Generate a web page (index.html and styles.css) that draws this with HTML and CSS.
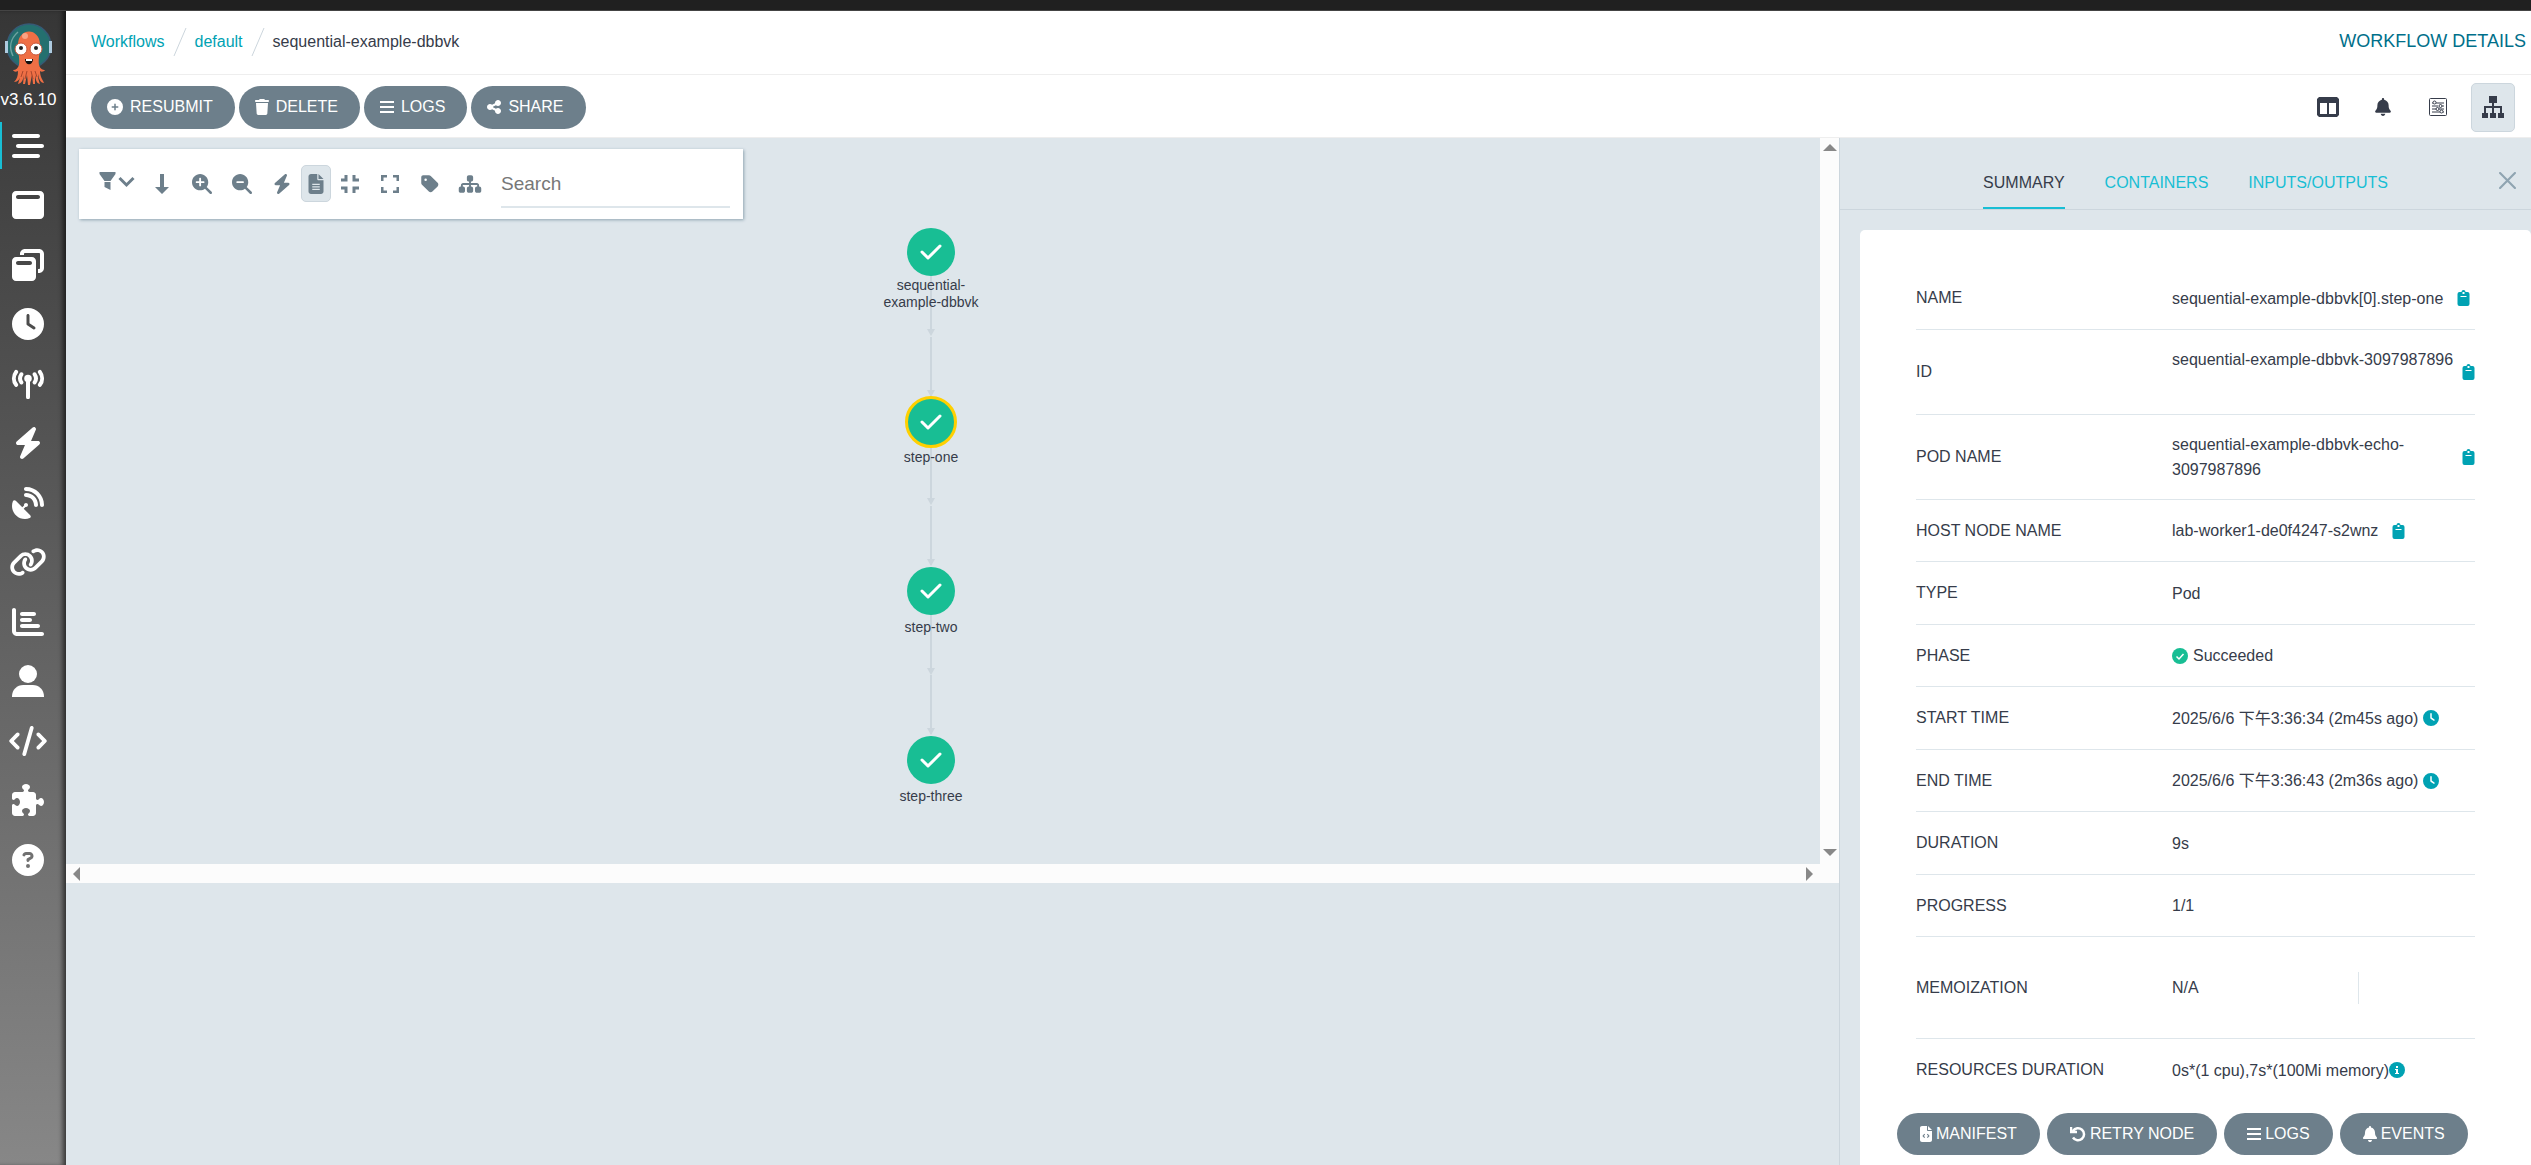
FILE: index.html
```html
<!DOCTYPE html>
<html lang="en">
<head>
  <meta charset="UTF-8">
  <meta name="viewport" content="width=device-width, initial-scale=1.0">
  <title>Workflow Details</title>
  <link rel="stylesheet" href="styles.css">
</head>
<body>
<!-- Icon sprite -->
<svg class="sprite" aria-hidden="true">
  <symbol id="logo" viewBox="0 0 48 62">
    <circle cx="24" cy="23" r="22" fill="#24706f" stroke="#365a76" stroke-width="1.5"/>
    <path d="M0 18h3v12H0zM44 18h3v12h-3z" fill="#aecbe0"/>
    <path d="M13 9C5 16 4 25 8 33" fill="none" stroke="#6ea3a0" stroke-width="1.5"/>
    <path d="M13 22c0-18 22-18 22 0 0 8-2 14-1 20 1 4 4 5 6 5-1 2-4 2-5 1 0 6 3 9 4 12-3 0-5-3-6-9 0 5 1 7 2 10-4-1-4-4-5-9v9h-2l-1-9-2 10h-2l-1-10-2 9h-2l1-9c-1 5-2 8-6 9l3-10c-1 5-3 8-7 8 3-3 4-6 4-11-2 1-4 1-5-1 3 0 5-2 6-5 1-6-1-12-1-20z" fill="#ef6f45"/>
    <path d="M22 48l-2 8M26 48l2 8M18 48l-2 6M30 48l2 6" stroke="#a8452c" stroke-width="1"/>
    <circle cx="20" cy="13" r="3" fill="#f9a484"/>
    <circle cx="16" cy="26" r="6" fill="#fff" stroke="#c9573a"/>
    <circle cx="31" cy="26" r="6" fill="#fff" stroke="#c9573a"/>
    <circle cx="16" cy="25" r="2" fill="#222"/>
    <circle cx="31" cy="25" r="2" fill="#222"/>
    <path d="M20 36h8c0 7-8 7-8 0z" fill="#111"/>
    <path d="M21 36h6v2h-6z" fill="#fff"/>
  </symbol>
  <symbol id="menu" viewBox="0 0 512 512"><path d="M0 96C0 78.3 14.3 64 32 64H416c17.7 0 32 14.3 32 32s-14.3 32-32 32H32C14.3 128 0 113.7 0 96zM64 256c0-17.7 14.3-32 32-32H480c17.7 0 32 14.3 32 32s-14.3 32-32 32H96c-17.7 0-32-14.3-32-32zM448 416c0 17.7-14.3 32-32 32H32c-17.7 0-32-14.3-32-32s14.3-32 32-32H416c17.7 0 32 14.3 32 32z"/></symbol>
  <symbol id="window" viewBox="0 0 512 512"><path fill-rule="evenodd" d="M64 32C28.7 32 0 60.7 0 96V416c0 35.3 28.7 64 64 64H448c35.3 0 64-28.7 64-64V96c0-35.3-28.7-64-64-64H64zM96 96H416c17.7 0 32 14.3 32 32s-14.3 32-32 32H96c-17.7 0-32-14.3-32-32s14.3-32 32-32z"/></symbol>
  <symbol id="windows" viewBox="0 0 512 512"><path fill-rule="evenodd" d="M432 64H208c-8.8 0-16 7.2-16 16V96H128V80c0-44.2 35.8-80 80-80H432c44.2 0 80 35.8 80 80V304c0 44.2-35.8 80-80 80H416V320h16c8.8 0 16-7.2 16-16V80c0-8.8-7.2-16-16-16zM0 192c0-35.3 28.7-64 64-64H320c35.3 0 64 28.7 64 64V448c0 35.3-28.7 64-64 64H64c-35.3 0-64-28.7-64-64V192zm64 32c0 17.7 14.3 32 32 32H288c17.7 0 32-14.3 32-32s-14.3-32-32-32H96c-17.7 0-32 14.3-32 32z"/></symbol>
  <symbol id="clock" viewBox="0 0 512 512"><path fill-rule="evenodd" d="M256 0a256 256 0 1 1 0 512A256 256 0 1 1 256 0zM232 120V256c0 8 4 15.5 10.7 20l96 64c11 7.4 25.9 4.4 33.3-6.7s4.4-25.9-6.7-33.3L280 243.2V120c0-13.3-10.7-24-24-24s-24 10.7-24 24z"/></symbol>
  <symbol id="tower" viewBox="0 0 576 512">
    <circle cx="288" cy="160" r="64"/>
    <path d="M288 170V480M175 90c-28 42-28 98 0 140M401 90c28 42 28 98 0 140M85 50c-50 66-50 154 0 220M491 50c50 66 50 154 0 220" fill="none" stroke="currentColor" stroke-width="68" stroke-linecap="round"/>
  </symbol>
  <symbol id="bolt" viewBox="0 0 448 512"><path d="M349.4 44.6c5.9-13.7 1.5-29.7-10.6-38.5s-28.6-8-39.9 1.8l-256 224c-10 8.8-13.6 22.9-8.9 35.3S50.7 288 64 288H175.5L98.6 467.4c-5.9 13.7-1.5 29.7 10.6 38.5s28.6 8 39.9-1.8l256-224c10-8.8 13.6-22.9 8.9-35.3s-16.6-20.7-30-20.7H272.5L349.4 44.6z"/></symbol>
  <symbol id="dish" viewBox="0 0 512 512"><path d="M192 32c0-17.7 14.3-32 32-32C383.1 0 512 128.9 512 288c0 17.7-14.3 32-32 32s-32-14.3-32-32C448 164.3 347.7 64 224 64c-17.7 0-32-14.3-32-32zM60.6 220.6L164.7 324.7l28.4-28.4c-.7-2.6-1.1-5.4-1.1-8.3c0-17.7 14.3-32 32-32s32 14.3 32 32s-14.3 32-32 32c-2.9 0-5.6-.4-8.3-1.1l-28.4 28.4L291.4 451.4c14.5 14.5 11.8 38.8-7.3 46.3C260.5 506.9 234.9 512 208 512C93.1 512 0 418.9 0 304c0-26.9 5.1-52.5 14.4-76.1c7.5-19 31.8-21.8 46.3-7.3zM224 96c106 0 192 86 192 192c0 17.7-14.3 32-32 32s-32-14.3-32-32c0-70.7-57.3-128-128-128c-17.7 0-32-14.3-32-32s14.3-32 32-32z"/></symbol>
  <symbol id="link" viewBox="0 0 640 512"><path d="M579.8 267.7c56.5-56.5 56.5-148 0-204.5c-50-50-128.8-56.5-186.3-15.4l-1.6 1.1c-14.4 10.3-17.7 30.3-7.4 44.6s30.3 17.7 44.6 7.4l1.6-1.1c32.1-22.9 76-19.3 103.8 8.6c31.5 31.5 31.5 82.5 0 114L422.3 334.8c-31.5 31.5-82.5 31.5-114 0c-27.9-27.9-31.5-71.8-8.6-103.8l1.1-1.6c10.3-14.4 6.9-34.4-7.4-44.6s-34.4-6.9-44.6 7.4l-1.1 1.6C206.5 251.2 213 330 263 380c56.5 56.5 148 56.5 204.5 0L579.8 267.7zM60.2 244.3c-56.5 56.5-56.5 148 0 204.5c50 50 128.8 56.5 186.3 15.4l1.6-1.1c14.4-10.3 17.7-30.3 7.4-44.6s-30.3-17.7-44.6-7.4l-1.6 1.1c-32.1 22.9-76 19.3-103.8-8.6C74 372 74 321 105.5 289.5L217.7 177.2c31.5-31.5 82.5-31.5 114 0c27.9 27.9 31.5 71.8 8.6 103.9l-1.1 1.6c-10.3 14.4-6.9 34.4 7.4 44.6s34.4 6.9 44.6-7.4l1.1-1.6C433.5 260.8 427 182 377 132c-56.5-56.5-148-56.5-204.5 0L60.2 244.3z"/></symbol>
  <symbol id="chart" viewBox="0 0 512 512"><path d="M32 32c17.7 0 32 14.3 32 32V400c0 8.8 7.2 16 16 16H480c17.7 0 32 14.3 32 32s-14.3 32-32 32H80c-44.2 0-80-35.8-80-80V64C0 46.3 14.3 32 32 32zm96 96c0-17.7 14.3-32 32-32H352c17.7 0 32 14.3 32 32s-14.3 32-32 32H160c-17.7 0-32-14.3-32-32zm32 64H288c17.7 0 32 14.3 32 32s-14.3 32-32 32H160c-17.7 0-32-14.3-32-32s14.3-32 32-32zm0 96H416c17.7 0 32 14.3 32 32s-14.3 32-32 32H160c-17.7 0-32-14.3-32-32s14.3-32 32-32z"/></symbol>
  <symbol id="user" viewBox="0 0 512 512"><circle cx="256" cy="144" r="144"/><path d="M0 512v-12C0 396 82 320 180 320h152c98 0 180 76 180 180v12z"/></symbol>
  <symbol id="code" viewBox="0 0 640 512"><path d="M392.8 1.2c-17-4.9-34.7 5-39.6 22l-128 448c-4.9 17 5 34.7 22 39.6s34.7-5 39.6-22l128-448c4.9-17-5-34.7-22-39.6zm80.6 120.1c-12.5 12.5-12.5 32.8 0 45.3L562.7 256l-89.4 89.4c-12.5 12.5-12.5 32.8 0 45.3s32.8 12.5 45.3 0l112-112c12.5-12.5 12.5-32.8 0-45.3l-112-112c-12.5-12.5-32.8-12.5-45.3 0zm-306.7 0c-12.5-12.5-32.8-12.5-45.3 0l-112 112c-12.5 12.5-12.5 32.8 0 45.3l112 112c12.5 12.5 32.8 12.5 45.3 0s12.5-32.8 0-45.3L77.3 256l89.4-89.4c12.5-12.5 12.5-32.8 0-45.3z"/></symbol>
  <symbol id="puzzle" viewBox="0 0 512 512"><path d="M192 104.8c0-9.2-5.8-17.3-13.2-22.8C167.2 73.3 160 61.3 160 48c0-26.5 28.7-48 64-48s64 21.5 64 48c0 13.3-7.2 25.3-18.8 34c-7.4 5.5-13.2 13.6-13.2 22.8c0 12.8 10.4 23.2 23.2 23.2H336c26.5 0 48 21.5 48 48v56.8c0 12.8 10.4 23.2 23.2 23.2c9.2 0 17.3-5.8 22.8-13.2c8.7-11.6 20.7-18.8 34-18.8c26.5 0 48 28.7 48 64s-21.5 64-48 64c-13.3 0-25.3-7.2-34-18.8c-5.5-7.4-13.6-13.2-22.8-13.2c-12.8 0-23.2 10.4-23.2 23.2V464c0 26.5-21.5 48-48 48H279.2c-12.8 0-23.2-10.4-23.2-23.2c0-9.2 5.8-17.3 13.2-22.8c11.6-8.7 18.8-20.7 18.8-34c0-26.5-28.7-48-64-48s-64 21.5-64 48c0 13.3 7.2 25.3 18.8 34c7.4 5.5 13.2 13.6 13.2 22.8c0 12.8-10.4 23.2-23.2 23.2H48c-26.5 0-48-21.5-48-48V343.2C0 330.4 10.4 320 23.2 320c9.2 0 17.3 5.8 22.8 13.2C54.7 344.8 66.7 352 80 352c26.5 0 48-28.7 48-64s-21.5-64-48-64c-13.3 0-25.3 7.2-34 18.8C40.5 250.2 32.4 256 23.2 256C10.4 256 0 245.6 0 232.8V176c0-26.5 21.5-48 48-48H168.8c12.8 0 23.2-10.4 23.2-23.2z"/></symbol>
  <symbol id="question" viewBox="0 0 512 512"><path d="M256 512A256 256 0 1 0 256 0a256 256 0 1 0 0 512zM169.8 165.3c7.9-22.3 29.1-37.3 52.8-37.3h58.3c34.9 0 63.1 28.3 63.1 63.1c0 22.6-12.1 43.5-31.7 54.8L280 264.4c-.2 13-10.9 23.6-24 23.6c-13.3 0-24-10.7-24-24V250.5c0-8.6 4.6-16.5 12.1-20.8l44.3-25.4c4.7-2.7 7.6-7.7 7.6-13.1c0-8.4-6.8-15.1-15.1-15.1H222.6c-3.4 0-6.4 2.1-7.5 5.3l-.4 1.2c-4.4 12.5-18.2 19-30.6 14.6s-19-18.2-14.6-30.6l.4-1.2zM224 352a32 32 0 1 1 64 0 32 32 0 1 1-64 0z"/></symbol>
  <symbol id="plus" viewBox="0 0 512 512"><path fill-rule="evenodd" d="M256 512A256 256 0 1 0 256 0a256 256 0 1 0 0 512zM232 344V280H168c-13.3 0-24-10.7-24-24s10.7-24 24-24h64V168c0-13.3 10.7-24 24-24s24 10.7 24 24v64h64c13.3 0 24 10.7 24 24s-10.7 24-24 24H280v64c0 13.3-10.7 24-24 24s-24-10.7-24-24z"/></symbol>
  <symbol id="trash" viewBox="0 0 448 512"><path d="M135.2 17.7L128 32H32C14.3 32 0 46.3 0 64S14.3 96 32 96H416c17.7 0 32-14.3 32-32s-14.3-32-32-32H320l-7.2-14.3C307.4 6.8 296.3 0 284.2 0H163.8c-12.1 0-23.2 6.8-28.6 17.7zM416 128H32L53.2 467c1.6 25.3 22.6 45 47.9 45H346.9c25.3 0 46.3-19.7 47.9-45L416 128z"/></symbol>
  <symbol id="bars" viewBox="0 0 448 512"><path d="M0 96h448M0 256h448M0 416h448" stroke="currentColor" stroke-width="64"/></symbol>
  <symbol id="share" viewBox="0 0 448 512"><path d="M352 224c53 0 96-43 96-96s-43-96-96-96s-96 43-96 96c0 4 .2 8 .7 11.9l-94.1 47C145.4 170.2 121.9 160 96 160c-53 0-96 43-96 96s43 96 96 96c25.9 0 49.4-10.2 66.6-26.9l94.1 47c-.5 3.9-.7 7.8-.7 11.9c0 53 43 96 96 96s96-43 96-96s-43-96-96-96c-25.9 0-49.4 10.2-66.6 26.9l-94.1-47c.5-3.9 .7-7.8 .7-11.9s-.2-8-.7-11.9l94.1-47C302.6 213.8 326.1 224 352 224z"/></symbol>
  <symbol id="filter" viewBox="0 0 16 20"><path d="M0 1h16v2l-5 7H5L0 3zM5 11h6v8l-6-3z"/></symbol>
  <symbol id="chevron" viewBox="0 0 16 20"><path d="M1 7l7 7 7-7" fill="none" stroke="currentColor" stroke-width="3"/></symbol>
  <symbol id="arrow-down" viewBox="0 0 14 20"><path d="M5 0h4v13h5l-7 7-7-7h5z"/></symbol>
  <symbol id="zoom-in" viewBox="0 0 512 512"><path fill-rule="evenodd" d="M416 208c0 45.9-14.9 88.3-40 122.7L502.6 457.4c12.5 12.5 12.5 32.8 0 45.3s-32.8 12.5-45.3 0L330.7 376c-34.4 25.2-76.8 40-122.7 40C93.1 416 0 322.9 0 208S93.1 0 208 0S416 93.1 416 208zM184 296c0 13.3 10.7 24 24 24s24-10.7 24-24V232h64c13.3 0 24-10.7 24-24s-10.7-24-24-24H232V120c0-13.3-10.7-24-24-24s-24 10.7-24 24v64H120c-13.3 0-24 10.7-24 24s10.7 24 24 24h64v64z"/></symbol>
  <symbol id="zoom-out" viewBox="0 0 512 512"><path fill-rule="evenodd" d="M416 208c0 45.9-14.9 88.3-40 122.7L502.6 457.4c12.5 12.5 12.5 32.8 0 45.3s-32.8 12.5-45.3 0L330.7 376c-34.4 25.2-76.8 40-122.7 40C93.1 416 0 322.9 0 208S93.1 0 208 0S416 93.1 416 208zM136 184c-13.3 0-24 10.7-24 24s10.7 24 24 24H280c13.3 0 24-10.7 24-24s-10.7-24-24-24H136z"/></symbol>
  <symbol id="file" viewBox="0 0 384 512"><path fill-rule="evenodd" d="M64 0C28.7 0 0 28.7 0 64V448c0 35.3 28.7 64 64 64H320c35.3 0 64-28.7 64-64V160H256c-17.7 0-32-14.3-32-32V0H64zM256 0V128H384L256 0zM96 248h192v32H96zM96 312h192v32H96zM96 376h192v32H96z"/></symbol>
  <symbol id="file-code" viewBox="0 0 384 512"><path fill-rule="evenodd" d="M64 0C28.7 0 0 28.7 0 64V448c0 35.3 28.7 64 64 64H320c35.3 0 64-28.7 64-64V160H256c-17.7 0-32-14.3-32-32V0H64zM256 0V128H384L256 0z"/><path d="M150 260l-50 56 50 56M234 260l50 56-50 56" fill="none" stroke="#6d7f8b" stroke-width="36"/></symbol>
  <symbol id="compress" viewBox="0 0 18 18"><path d="M0 5h5V0M13 0v5h5M0 13h5v5M18 13h-5v5" fill="none" stroke="currentColor" stroke-width="3"/></symbol>
  <symbol id="expand" viewBox="0 0 18 18"><path d="M1 6V1h5M12 1h5v5M1 12v5h5M17 12v5h-5" fill="none" stroke="currentColor" stroke-width="3"/></symbol>
  <symbol id="tag" viewBox="0 0 448 512"><path fill-rule="evenodd" d="M0 80V229.5c0 17 6.7 33.3 18.7 45.3l176 176c25 25 65.5 25 90.5 0L418.7 317.3c25-25 25-65.5 0-90.5l-176-176c-12-12-28.3-18.7-45.3-18.7H48C21.5 32 0 53.5 0 80zm112 32a32 32 0 1 1 0 64 32 32 0 1 1 0-64z"/></symbol>
  <symbol id="sitemap" viewBox="0 0 576 512"><path d="M208 80c0-26.5 21.5-48 48-48h64c26.5 0 48 21.5 48 48v64c0 26.5-21.5 48-48 48h-8v40H464c30.9 0 56 25.1 56 56v32h8c26.5 0 48 21.5 48 48v64c0 26.5-21.5 48-48 48H464c-26.5 0-48-21.5-48-48V368c0-26.5 21.5-48 48-48h8V288c0-4.4-3.6-8-8-8H312v40h8c26.5 0 48 21.5 48 48v64c0 26.5-21.5 48-48 48H256c-26.5 0-48-21.5-48-48V368c0-26.5 21.5-48 48-48h8V280H112c-4.4 0-8 3.6-8 8v32h8c26.5 0 48 21.5 48 48v64c0 26.5-21.5 48-48 48H48c-26.5 0-48-21.5-48-48V368c0-26.5 21.5-48 48-48h8V288c0-30.9 25.1-56 56-56H264V192h-8c-26.5 0-48-21.5-48-48V80z"/></symbol>
  <symbol id="tree" viewBox="0 0 22 22"><path d="M7 0h8v7h-3v3h8v7h2v5h-6v-5h2v-5h-6v5h2v5H8v-5h2v-5H4v5h2v5H0v-5h2v-7h8V7H7z"/></symbol>
  <symbol id="columns" viewBox="0 0 22 20"><path fill-rule="evenodd" d="M2 0h18l2 2v16l-2 2H2l-2-2V2zM3 6v11h7V6zM12 6v11h7V6z"/></symbol>
  <symbol id="bell" viewBox="0 0 448 512"><path d="M224 0c-17.7 0-32 14.3-32 32V51.2C119 66 64 130.6 64 208v18.8c0 47-17.3 92.4-48.5 127.6l-7.4 8.3c-8.4 9.4-10.4 22.9-5.3 34.4S19.4 416 32 416H416c12.6 0 24-7.4 29.2-18.9s3.1-25-5.3-34.4l-7.4-8.3C401.3 319.2 384 273.9 384 226.8V208c0-77.4-55-142-128-156.8V32c0-17.7-14.3-32-32-32zm45.3 493.3c12-12 18.7-28.3 18.7-45.3H160c0 17 6.7 33.3 18.7 45.3s28.3 18.7 45.3 18.7s33.3-6.7 45.3-18.7z"/></symbol>
  <symbol id="sliders" viewBox="0 0 18 18">
    <rect x="0.5" y="0.5" width="17" height="17" rx="1" fill="none" stroke="currentColor"/>
    <path d="M3 5h1M7 5h8M3 8h6M13 8h2M3 11h4M10 11h5M3 14h8M14 14h1" stroke="currentColor"/>
    <g fill="none" stroke="currentColor"><circle cx="5.5" cy="4.5" r="1.5"/><circle cx="11.5" cy="8" r="1.5"/><circle cx="8.5" cy="11" r="1.5"/><circle cx="12.5" cy="13.5" r="1.5"/></g>
  </symbol>
  <symbol id="rotate" viewBox="0 0 16 16"><path d="M3 5a6 6 0 1 1 0 6.5M1 1v5h6" fill="none" stroke="currentColor" stroke-width="2.5"/></symbol>
  <symbol id="clipboard" viewBox="0 0 12 16"><path fill-rule="evenodd" d="M2 2h2a2 2 0 0 1 4 0h2a2 2 0 0 1 2 2v10a2 2 0 0 1-2 2H2a2 2 0 0 1-2-2V4a2 2 0 0 1 2-2zM5 2v2h2V2zM3 6v1h6V6z"/></symbol>
  <symbol id="ok" viewBox="0 0 16 16"><circle cx="8" cy="8" r="8"/><path d="M4.5 8.5l2.5 2.5 4.5-5" fill="none" stroke="#fff" stroke-width="1.5"/></symbol>
  <symbol id="info" viewBox="0 0 16 16"><circle cx="8" cy="8" r="8"/><path d="M7 4h2v2H7zM6 7h3v4h1v1H6v-1h1V8H6z" fill="#fff"/></symbol>
  <symbol id="check" viewBox="0 0 22 16"><path d="M2 8l6 6L20 2" fill="none" stroke="#fff" stroke-width="3" stroke-linecap="round" stroke-linejoin="round"/></symbol>
  <symbol id="close" viewBox="0 0 16 16"><path d="M1 1l14 14M15 1L1 15" stroke="currentColor" stroke-width="2" stroke-linecap="round"/></symbol>
</svg>

<div class="top-strip"></div>
<div class="app">
  <aside class="sidebar">
    <svg class="logo"><use href="#logo"/></svg>
    <span class="version">v3.6.10</span>
    <nav class="side-nav">
      <a href="#" class="active" aria-label="Workflows"><svg><use href="#menu"/></svg></a>
      <a href="#" aria-label="Workflow Templates"><svg><use href="#window"/></svg></a>
      <a href="#" aria-label="Cluster Workflow Templates"><svg><use href="#windows"/></svg></a>
      <a href="#" aria-label="Cron Workflows"><svg><use href="#clock"/></svg></a>
      <a href="#" aria-label="Event Flow"><svg class="wide"><use href="#tower"/></svg></a>
      <a href="#" aria-label="Sensors"><svg><use href="#bolt"/></svg></a>
      <a href="#" aria-label="Event Sources"><svg><use href="#dish"/></svg></a>
      <a href="#" aria-label="Workflow Event Bindings"><svg class="wide"><use href="#link"/></svg></a>
      <a href="#" aria-label="Reports"><svg><use href="#chart"/></svg></a>
      <a href="#" aria-label="User"><svg><use href="#user"/></svg></a>
      <a href="#" aria-label="API Docs"><svg class="wide"><use href="#code"/></svg></a>
      <a href="#" aria-label="Plugins"><svg><use href="#puzzle"/></svg></a>
      <a href="#" aria-label="Help"><svg><use href="#question"/></svg></a>
    </nav>
  </aside>

  <main class="page">
    <header class="title-bar">
      <nav class="breadcrumbs">
        <a href="#">Workflows</a>
        <svg class="slash" viewBox="0 0 14 28"><path d="M13 0L1 28" stroke="#ccd6dd"/></svg>
        <a href="#">default</a>
        <svg class="slash" viewBox="0 0 14 28"><path d="M13 0L1 28" stroke="#ccd6dd"/></svg>
        <span>sequential-example-dbbvk</span>
      </nav>
      <h1>WORKFLOW DETAILS</h1>
    </header>

    <div class="toolbar">
      <div class="actions">
        <button class="btn"><svg><use href="#plus"/></svg>RESUBMIT</button>
        <button class="btn"><svg class="narrow"><use href="#trash"/></svg>DELETE</button>
        <button class="btn"><svg class="narrow"><use href="#bars"/></svg>LOGS</button>
        <button class="btn"><svg class="narrow"><use href="#share"/></svg>SHARE</button>
      </div>
      <div class="views">
        <button aria-label="Columns"><svg><use href="#columns"/></svg></button>
        <button aria-label="Events"><svg class="small"><use href="#bell"/></svg></button>
        <button aria-label="Timeline"><svg class="small"><use href="#sliders"/></svg></button>
        <button class="selected" aria-label="Graph"><svg><use href="#tree"/></svg></button>
      </div>
    </div>

    <div class="content">
      <section class="graph">
        <div class="canvas">
          <div class="graph-panel">
            <button class="filter" aria-label="Filter"><svg><use href="#filter"/></svg><svg><use href="#chevron"/></svg></button>
            <button aria-label="Direction"><svg><use href="#arrow-down"/></svg></button>
            <button aria-label="Zoom in"><svg><use href="#zoom-in"/></svg></button>
            <button aria-label="Zoom out"><svg><use href="#zoom-out"/></svg></button>
            <button aria-label="Fast renderer"><svg><use href="#bolt"/></svg></button>
            <button class="selected" aria-label="Show artifacts"><svg><use href="#file"/></svg></button>
            <button aria-label="Collapse"><svg class="small"><use href="#compress"/></svg></button>
            <button aria-label="Expand"><svg class="small"><use href="#expand"/></svg></button>
            <button aria-label="Tags"><svg><use href="#tag"/></svg></button>
            <button aria-label="Layout"><svg class="wide"><use href="#sitemap"/></svg></button>
            <input type="text" placeholder="Search" aria-label="Search">
          </div>

          <svg class="edges" viewBox="0 0 8 560">
            <g stroke="#ccd6dd" stroke-width="2">
              <path d="M4 24V82M4 85V145M4 194V250M4 254V313M4 363V420M4 423V482"/>
            </g>
            <g fill="#ccd6dd">
              <path d="M0 77h8l-4 7zM0 138h8l-4 7zM0 246h8l-4 7zM0 307h8l-4 7zM0 416h8l-4 7zM0 476h8l-4 7z"/>
            </g>
          </svg>
          <div class="node node-root"><span class="dot"><svg><use href="#check"/></svg></span>sequential-<br>example-dbbvk</div>
          <div class="node node-one selected"><span class="dot"><svg><use href="#check"/></svg></span>step-one</div>
          <div class="node node-two"><span class="dot"><svg><use href="#check"/></svg></span>step-two</div>
          <div class="node node-three"><span class="dot"><svg><use href="#check"/></svg></span>step-three</div>
        </div>
        <div class="scroll-y"><i class="up"></i><i class="down"></i></div>
        <div class="scroll-x"><i class="left"></i><i class="right"></i></div>
      </section>

      <aside class="details">
        <nav class="tabs">
          <a href="#" class="current">SUMMARY</a>
          <a href="#">CONTAINERS</a>
          <a href="#">INPUTS/OUTPUTS</a>
          <button class="close" aria-label="Close"><svg><use href="#close"/></svg></button>
        </nav>
        <div class="card">
          <dl>
            <div class="row"><dt>NAME</dt><dd><span>sequential-example-dbbvk[0].step-one</span><svg class="copy"><use href="#clipboard"/></svg></dd></div>
            <div class="row tall"><dt>ID</dt><dd><span>sequential-example-dbbvk-3097987896</span><svg class="copy"><use href="#clipboard"/></svg></dd></div>
            <div class="row tall"><dt>POD NAME</dt><dd><span>sequential-example-dbbvk-echo-3097987896</span><svg class="copy"><use href="#clipboard"/></svg></dd></div>
            <div class="row"><dt>HOST NODE NAME</dt><dd><span>lab-worker1-de0f4247-s2wnz</span><svg class="copy"><use href="#clipboard"/></svg></dd></div>
            <div class="row"><dt>TYPE</dt><dd>Pod</dd></div>
            <div class="row"><dt>PHASE</dt><dd class="status"><svg class="ok"><use href="#ok"/></svg>Succeeded</dd></div>
            <div class="row"><dt>START TIME</dt><dd class="status">2025/6/6 下午3:36:34 (2m45s ago)<svg><use href="#clock"/></svg></dd></div>
            <div class="row"><dt>END TIME</dt><dd class="status">2025/6/6 下午3:36:43 (2m36s ago)<svg><use href="#clock"/></svg></dd></div>
            <div class="row"><dt>DURATION</dt><dd>9s</dd></div>
            <div class="row"><dt>PROGRESS</dt><dd>1/1</dd></div>
            <div class="row memo"><dt>MEMOIZATION</dt><dd>N/A</dd></div>
            <div class="row"><dt>RESOURCES DURATION</dt><dd>0s*(1 cpu),7s*(100Mi memory)<svg><use href="#info"/></svg></dd></div>
          </dl>
          <div class="card-actions">
            <button class="btn"><svg class="slim"><use href="#file-code"/></svg>MANIFEST</button>
            <button class="btn"><svg><use href="#rotate"/></svg>RETRY NODE</button>
            <button class="btn"><svg class="narrow"><use href="#bars"/></svg>LOGS</button>
            <button class="btn"><svg class="narrow"><use href="#bell"/></svg>EVENTS</button>
          </div>
        </div>
      </aside>
    </div>
  </main>
</div>
</body>
</html>
```

FILE: styles.css
```css
* {
  box-sizing: border-box;
}

body {
  margin: 0;
  height: 100vh;
  display: flex;
  flex-direction: column;
  overflow: hidden;
  font-family: "Liberation Sans", Arial, "Noto Sans CJK TC", sans-serif;
  font-size: 16px;
  color: #363c4a;
  background-color: #dee6eb;
}

a {
  color: #00a2b3;
  text-decoration: none;
}

button {
  font-family: inherit;
  font-size: 16px;
  color: inherit;
  background: none;
  border: none;
  padding: 0;
  cursor: pointer;
}

svg {
  fill: currentColor;
  flex: none;
}

.sprite {
  display: none;
}

.top-strip {
  height: 11px;
  flex: none;
  background-color: #202020;
  border-bottom: 1px solid #444;
}

.app {
  flex: 1;
  min-height: 0;
  display: flex;
}

/* Sidebar */
.sidebar {
  width: 66px;
  flex: none;
  padding-top: 12px;
  color: #fff;
  background: linear-gradient(to bottom, #363636, #878787);
  box-shadow: inset -5px 0 5px -2px rgba(0, 0, 0, 0.6);
}

.logo {
  display: block;
  width: 48px;
  height: 62px;
  margin-left: 5px;
}

.version {
  display: block;
  width: 57px;
  line-height: 20px;
  margin: 5px 0 12px;
  text-align: center;
  font-size: 17px;
}

.side-nav {
  height: 761px;
  display: flex;
  flex-direction: column;
  justify-content: space-between;
}

.side-nav a {
  height: 47px;
  width: 56px;
  display: flex;
  align-items: center;
  justify-content: center;
  color: #fff;
}

.side-nav a.active {
  box-shadow: inset 2px 0 #18bed4;
}

.side-nav svg {
  width: 32px;
  height: 32px;
}

.side-nav svg.wide {
  width: 38px;
  height: 30px;
}

/* Header */
.page {
  flex: 1;
  min-width: 0;
  display: flex;
  flex-direction: column;
}

.title-bar {
  height: 64px;
  flex: none;
  display: flex;
  align-items: center;
  justify-content: space-between;
  padding: 0 5px 2px 25px;
  background-color: #fff;
  border-bottom: 1px solid #eee;
}

.title-bar h1 {
  margin: 0;
  font-size: 18px;
  font-weight: normal;
  color: #006f8a;
}

.breadcrumbs {
  display: flex;
  align-items: center;
  gap: 8px;
}

.slash {
  width: 14px;
  height: 28px;
}

.toolbar {
  height: 63px;
  flex: none;
  display: flex;
  align-items: center;
  justify-content: space-between;
  padding: 2px 16px 0 25px;
  background-color: #fff;
  border-bottom: 1px solid #eee;
}

.actions {
  display: flex;
  gap: 4px;
}

.btn {
  height: 43px;
  display: flex;
  align-items: center;
  gap: 7px;
  padding: 0 22px 0 16px;
  border-radius: 22px;
  color: #fff;
  background-color: #6d7f8b;
  white-space: nowrap;
}

.btn svg {
  width: 16px;
  height: 16px;
}

.btn svg.narrow {
  width: 14px;
}

.btn svg.slim {
  width: 12px;
}

.views {
  display: flex;
  gap: 11px;
}

.views button {
  width: 44px;
  height: 49px;
  display: flex;
  align-items: center;
  justify-content: center;
}

.views svg {
  width: 22px;
  height: 22px;
}

.views svg.small {
  width: 18px;
  height: 18px;
}

.selected {
  border-radius: 5px;
}

.views .selected,
.graph-panel .selected {
  background-color: #dee6eb;
  border: 1px solid #ccd6dd;
}

/* Graph */
.content {
  flex: 1;
  min-height: 0;
  display: flex;
}

.graph {
  flex: 1;
  min-width: 0;
  display: grid;
  grid-template-columns: 1fr 19px;
  grid-template-rows: 726px 19px;
  align-content: start;
}

.canvas {
  position: relative;
  padding: 11px 13px;
}

.graph-panel {
  width: 664px;
  height: 70px;
  display: flex;
  align-items: center;
  padding: 0 13px 1px 20px;
  color: #6d7f8b;
  background-color: #fff;
  box-shadow: 1px 1px 3px #8fa4b1;
}

.graph-panel button {
  width: 30px;
  height: 37px;
  margin-right: 10px;
  display: flex;
  align-items: center;
  justify-content: center;
}

.graph-panel .filter {
  width: 36px;
  gap: 2px;
  margin-right: 12px;
  padding-bottom: 5px;
}

.graph-panel .selected {
  margin: 0 4px 0 -6px;
}

.graph-panel svg {
  width: 20px;
  height: 20px;
}

.graph-panel .filter svg {
  width: 17px;
}

.graph-panel svg.small {
  width: 18px;
  height: 18px;
}

.graph-panel svg.wide {
  width: 24px;
}

.graph-panel input {
  flex: 1;
  min-width: 0;
  height: 48px;
  margin-left: 6px;
  padding: 2px 0 0;
  border: none;
  border-bottom: 2px solid #dee6eb;
  font-family: inherit;
  font-size: 19px;
}

.graph-panel input::placeholder {
  color: #777;
}

.edges {
  position: absolute;
  left: 861px;
  top: 114px;
  width: 8px;
  height: 560px;
}

.node {
  position: absolute;
  left: 795px;
  width: 140px;
  text-align: center;
  font-size: 14px;
  line-height: 17px;
}

.node-root {
  top: 90px;
}

.node-one {
  top: 258px;
}

.node-two {
  top: 429px;
}

.node-three {
  top: 598px;
}

.dot {
  width: 48px;
  height: 48px;
  margin: 0 auto 4px;
  display: flex;
  align-items: center;
  justify-content: center;
  border-radius: 50%;
  background-color: #18be94;
}

.dot svg {
  width: 22px;
  height: 16px;
}

.node-root .dot,
.node-one .dot {
  margin-bottom: 1px;
}

.node.selected .dot {
  width: 52px;
  height: 52px;
  border: 3px solid #ffd000;
}

.scroll-y,
.scroll-x {
  display: flex;
  justify-content: space-between;
  align-items: center;
  background-color: #fcfcfc;
}

.scroll-y {
  flex-direction: column;
  grid-row: span 2;
  padding: 6px 0 27px;
}

.scroll-x {
  grid-row: 2;
  padding: 0 7px;
}

.graph i {
  width: 0;
  height: 0;
  border: 7px solid transparent;
}

.graph i.up {
  border-top: none;
  border-bottom-color: #888;
}

.graph i.down {
  border-bottom: none;
  border-top-color: #888;
}

.graph i.left {
  border-left: none;
  border-right-color: #888;
}

.graph i.right {
  border-right: none;
  border-left-color: #888;
}

/* Node details */
.details {
  width: 692px;
  flex: none;
  display: flex;
  flex-direction: column;
  border-left: 1px solid #ccd6dd;
}

.tabs {
  position: relative;
  height: 72px;
  flex: none;
  display: flex;
  justify-content: center;
  align-items: flex-end;
  gap: 40px;
  border-bottom: 1px solid #ccd6dd;
}

.tabs a {
  height: 45px;
  line-height: 38px;
  color: #18bed4;
}

.tabs a.current {
  color: #363c4a;
  border-bottom: 2px solid #18bed4;
}

.close {
  position: absolute;
  right: 15px;
  top: 34px;
  color: #8fa4b1;
}

.close svg {
  display: block;
  width: 17px;
  height: 17px;
}

.card {
  flex: 1;
  margin: 20px 0 0 20px;
  padding: 37px 56px 0;
  border-radius: 5px 5px 0 0;
  background-color: #fff;
}

dl {
  margin: 0;
}

.row {
  height: 62px;
  display: flex;
  align-items: center;
  border-bottom: 1px solid #dee6eb;
}

.row:nth-child(odd) {
  height: 63px;
}

.row.tall {
  height: 85px;
}

.row.memo {
  height: 101px;
}

.row:last-child {
  border-bottom: none;
}

dt {
  width: 256px;
  flex: none;
}

dd {
  flex: 1;
  margin: 0;
  display: flex;
  align-items: center;
  line-height: 25px;
}

dd svg {
  width: 16px;
  height: 16px;
  color: #00a2b3;
}

dd svg.copy {
  width: 13px;
  margin-left: 14px;
}

dd svg.ok {
  color: #18be94;
}

.status {
  gap: 5px;
}

.tall span {
  flex: 1;
  min-height: 50px;
}

.tall dd svg.copy {
  margin-left: 4px;
}

.row.memo {
  height: 102px;
}

.memo dd {
  flex: none;
  width: 187px;
  height: 32px;
  border-right: 1px solid #dee6eb;
}

.card-actions {
  display: flex;
  gap: 7px;
  margin: 12px -19px 0;
}

.card-actions .btn {
  height: 42px;
  gap: 4px;
  padding: 0 23px;
}
```
